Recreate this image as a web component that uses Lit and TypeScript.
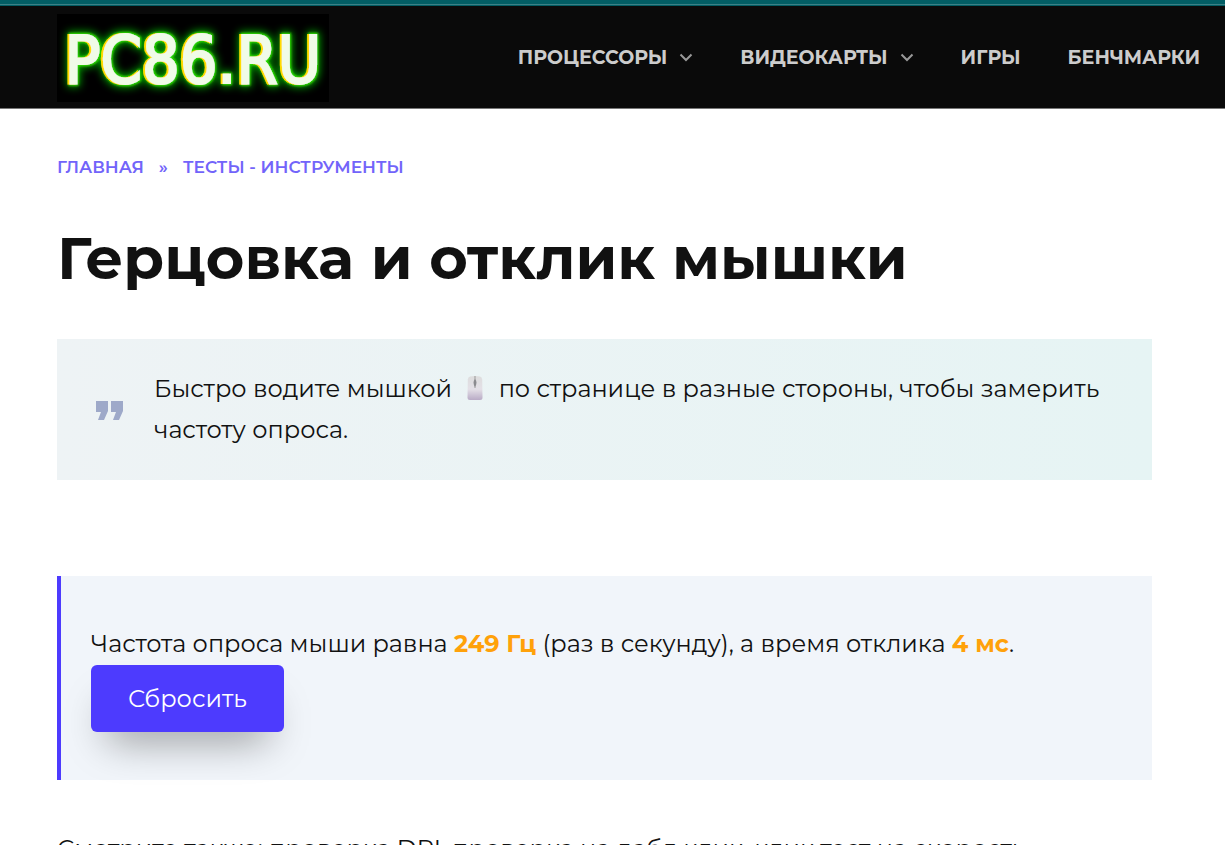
import { LitElement, html, css, svg } from "lit";
import { customElement, state } from "lit/decorators.js";

const chevron = svg`<svg class="chevron" viewBox="0 0 14 10" aria-hidden="true"><path d="M1.500 1.500 7 7l5.500-5.500" /></svg>`;

@customElement("site-logo")
export class SiteLogo extends LitElement {
  static styles = css`
    :host { display: block; flex: none; }
    .logo { display: block; width: 272px; height: 88px; background: #000; }
    .word { fill: #f0fbe8; stroke: #f0fbe8; stroke-width: 2px; filter: url(#neon); font-family: "DejaVu Sans Condensed", "DejaVu Sans", sans-serif; font-size: 66px; }
  `;
  render() {
    return html`<svg class="logo" viewBox="0 0 272 88" role="img" aria-label="PC86.RU">
      <defs>
        <filter id="neon" x="-10%" y="-30%" width="120%" height="160%">
          <feMorphology in="SourceAlpha" operator="dilate" radius="2" result="fat" />
          <feGaussianBlur in="fat" stdDeviation="4" result="soft" />
          <feFlood flood-color="#00b400" /><feComposite in2="soft" operator="in" result="glow" />
          <feMorphology in="SourceAlpha" operator="dilate" radius="1" result="rimShape" />
          <feGaussianBlur in="rimShape" stdDeviation="1" result="rimSoft" />
          <feFlood flood-color="#2fe600" /><feComposite in2="rimSoft" operator="in" result="rim" />
          <feOffset in="SourceAlpha" dx="-2" result="left" />
          <feFlood flood-color="#ffdc00" /><feComposite in2="left" operator="in" result="edge" />
          <feMerge><feMergeNode in="glow" /><feMergeNode in="rim" /><feMergeNode in="edge" /><feMergeNode in="SourceGraphic" /></feMerge>
        </filter>
      </defs>
      <text class="word" x="136" y="69" text-anchor="middle">PC86.RU</text>
    </svg>`;
  }
}

@customElement("app-root")
export class AppRoot extends LitElement {
  @state() private rate = 249;
  @state() private delay = 4;

  static styles = css`
    :host { display: block; height: 100vh; overflow: hidden; background: #fff; color: #111; font: 400 24px/41px Montserrat, Inter, sans-serif; }
    * { box-sizing: border-box; }
    a { color: inherit; text-decoration: none; }
    p { margin: 0; }
    .strip { height: 6px; background: linear-gradient(#025d64 4px, #3b8085 4px, #3b8085 5px, #025d64 5px); }
    .header { display: flex; align-items: center; justify-content: space-between; height: 103px; padding: 1px 25px 0 57px; background: #0a0a0a; border-bottom: 1px solid #777; }
    .nav { display: flex; gap: 47px; font-size: 19px; line-height: 28px; font-weight: 700; color: #ccc; white-space: nowrap; }
    .item { display: flex; align-items: center; gap: 12px; }
    .chevron { width: 14px; height: 10px; fill: none; stroke: #999; stroke-width: 2; }
    .main { padding: 44px 73px 0 57px; }
    .crumbs { display: flex; gap: 15px; color: #7264fa; font-size: 17px; line-height: 28px; font-weight: 600; }
    .title { margin: 41px 0 45px; font-size: 59px; line-height: 72px; font-weight: 700; }
    .quote { display: flex; align-items: center; gap: 30px; margin: 0; padding: 29px 38px 30px; background: linear-gradient(90deg, #eef3f5, #e6f4f4); }
    .mark { width: 29px; height: 24px; flex: none; fill: #9ea9c9; }
    .mouse { width: 16px; height: 26px; margin: 0 9px; vertical-align: -4px; }
    .result { margin-top: 96px; padding: 47px 30px 48px; background: #f1f5fa; border-left: 4px solid #4d3bfe; }
    .value { color: #ffa10a; font-weight: 700; }
    .reset { display: block; margin-top: 1px; padding: 13px 37px; border: 0; border-radius: 6px; background: #4d3bfe; color: #fff; font: inherit; box-shadow: 0 24px 40px -16px rgba(0, 0, 0, 0.4); cursor: pointer; }
    .more { margin-top: 48px; }
  `;

  private reset() {
    this.rate = 0;
    this.delay = 0;
  }

  render() {
    return html`
      <div class="strip"></div>
      <header class="header">
        <a href="#" aria-label="PC86.RU"><site-logo></site-logo></a>
        <nav class="nav">
          <a class="item" href="#">ПРОЦЕССОРЫ ${chevron}</a>
          <a class="item" href="#">ВИДЕОКАРТЫ ${chevron}</a>
          <a class="item" href="#">ИГРЫ</a>
          <a class="item" href="#">БЕНЧМАРКИ</a>
        </nav>
      </header>
      <main class="main">
        <nav class="crumbs"><a href="#">ГЛАВНАЯ</a><span>»</span><a href="#">ТЕСТЫ - ИНСТРУМЕНТЫ</a></nav>
        <h1 class="title">Герцовка и отклик мышки</h1>
        <blockquote class="quote">
          <svg class="mark" viewBox="0 0 29 24" aria-hidden="true"><path d="M1 4h12v10L9 23H3l3-8H1ZM16 4h12v10l-4 9h-6l3-8h-5Z" /></svg>
          <p>Быстро водите мышкой
            <svg class="mouse" viewBox="0 0 16 26" role="img" aria-label="Мышка">
              <defs><linearGradient id="body" x2="0" y2="1"><stop offset="0" stop-color="#ddd" /><stop offset=".55" stop-color="#e4e0e7" /><stop offset="1" stop-color="#b9abc6" /></linearGradient></defs>
              <path d="M3 1.500Q8 .5 13 1.500q2 .5 2.200 3l.3 18q0 2.500-2.500 2.500H3Q.5 25 .5 22.500l.3-18Q1 2 3 1.500Z" fill="url(#body)" />
              <path d="M8 1v12" stroke="#999" /><path d="M8 4q3 3 0 8-3-5 0-8Z" fill="#8b8b8f" />
            </svg>
            по странице в разные стороны, чтобы замерить частоту опроса.</p>
        </blockquote>
        <section class="result">
          <p>Частота опроса мыши равна <b class="value">${this.rate} Гц</b> (раз в секунду), а время отклика <b class="value">${this.delay} мс</b>.</p>
          <button class="reset" type="button" @click=${this.reset}>Сбросить</button>
        </section>
        <p class="more">Смотрите также: проверка DPI, проверка на дабл клик, клик тест на скорость.</p>
      </main>
    `;
  }
}
